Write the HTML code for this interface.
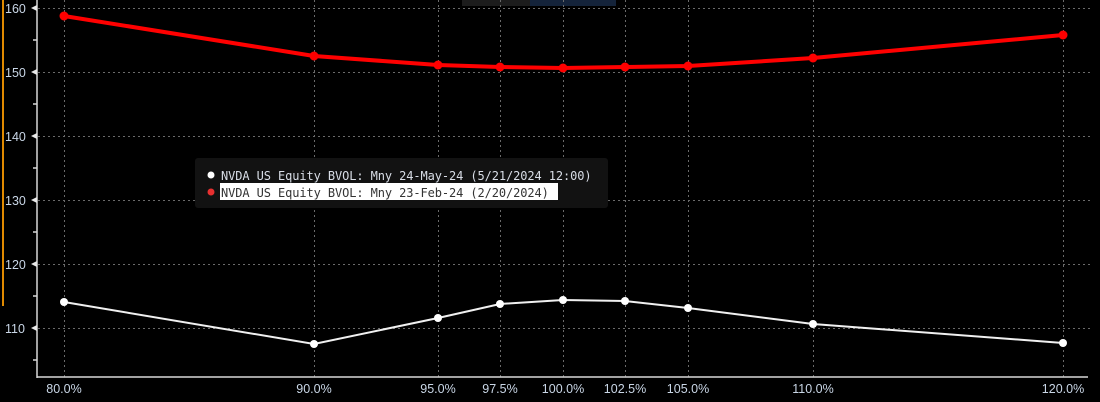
<!DOCTYPE html>
<html><head><meta charset="utf-8"><style>
html,body{margin:0;padding:0;background:#000;width:1100px;height:402px;overflow:hidden}
svg{display:block}
text{font-family:"Liberation Sans",sans-serif;font-size:12.5px;fill:#c9d6e6}
</style></head><body>
<svg width="1100" height="402" viewBox="0 0 1100 402">
<rect width="1100" height="402" fill="#000"/>
<rect x="2" y="0" width="2" height="306" fill="#e08a00"/>
<rect x="462" y="0" width="68" height="6" fill="#1c1c1c"/>
<rect x="530" y="0" width="86" height="6" fill="#14233a"/>
<g stroke="#6a6a6a" stroke-width="1" stroke-dasharray="2,3">
<line x1="38" y1="8.5" x2="1090" y2="8.5"/>
<line x1="38" y1="72.5" x2="1090" y2="72.5"/>
<line x1="38" y1="136.5" x2="1090" y2="136.5"/>
<line x1="38" y1="200.5" x2="1090" y2="200.5"/>
<line x1="38" y1="264.5" x2="1090" y2="264.5"/>
<line x1="38" y1="328.5" x2="1090" y2="328.5"/>
<line x1="64.5" y1="0" x2="64.5" y2="377"/>
<line x1="314.5" y1="0" x2="314.5" y2="377"/>
<line x1="438.5" y1="0" x2="438.5" y2="377"/>
<line x1="500.5" y1="0" x2="500.5" y2="377"/>
<line x1="563.5" y1="0" x2="563.5" y2="377"/>
<line x1="625.5" y1="0" x2="625.5" y2="377"/>
<line x1="688.5" y1="0" x2="688.5" y2="377"/>
<line x1="813.5" y1="0" x2="813.5" y2="377"/>
<line x1="1063.5" y1="0" x2="1063.5" y2="377"/>
</g>
<g stroke="#d8d8d8" stroke-width="1.5">
<line x1="37" y1="0" x2="37" y2="378"/>
<line x1="37" y1="377" x2="1088" y2="377"/>
<line x1="33" y1="40" x2="37" y2="40"/><line x1="33" y1="104" x2="37" y2="104"/>
<line x1="33" y1="168" x2="37" y2="168"/><line x1="33" y1="232" x2="37" y2="232"/>
<line x1="33" y1="296" x2="37" y2="296"/><line x1="33" y1="360" x2="37" y2="360"/>
</g>
<g fill="#e8e8e8">
<polygon points="31,8 37,5 37,11"/><polygon points="31,72 37,69 37,75"/>
<polygon points="31,136 37,133 37,139"/><polygon points="31,200 37,197 37,203"/>
<polygon points="31,264 37,261 37,267"/><polygon points="31,328 37,325 37,331"/>
</g>
<g text-anchor="start" style="font-size:14px">
<text x="5" y="13">160</text><text x="5" y="77">150</text><text x="5" y="141">140</text>
<text x="5" y="205">130</text><text x="5" y="269">120</text><text x="5" y="333">110</text>
</g>
<g text-anchor="middle">
<text x="64" y="393">80.0%</text><text x="314" y="393">90.0%</text><text x="438" y="393">95.0%</text>
<text x="500" y="393">97.5%</text><text x="563" y="393">100.0%</text><text x="625" y="393">102.5%</text>
<text x="688" y="393">105.0%</text><text x="813" y="393">110.0%</text><text x="1063" y="393">120.0%</text>
</g>
<polyline fill="none" stroke="#ff0000" stroke-width="4" stroke-linejoin="round" points="64,16 314,56 438,65 500,67 563,68 625,67 688,66 813,58 1063,35"/>
<g fill="#ff0000">
<circle cx="64" cy="16" r="4.5"/><circle cx="314" cy="56" r="4.5"/><circle cx="438" cy="65" r="4.5"/>
<circle cx="500" cy="67" r="4.5"/><circle cx="563" cy="68" r="4.5"/><circle cx="625" cy="67" r="4.5"/>
<circle cx="688" cy="66" r="4.5"/><circle cx="813" cy="58" r="4.5"/><circle cx="1063" cy="35" r="4.5"/>
</g>
<polyline fill="none" stroke="#f0f0f0" stroke-width="2" points="64,302 314,344 438,318 500,304 563,300 625,301 688,308 813,324 1063,343"/>
<g fill="#ffffff">
<circle cx="64" cy="302" r="4"/><circle cx="314" cy="344" r="4"/><circle cx="438" cy="318" r="4"/>
<circle cx="500" cy="304" r="4"/><circle cx="563" cy="300" r="4"/><circle cx="625" cy="301" r="4"/>
<circle cx="688" cy="308" r="4"/><circle cx="813" cy="324" r="4"/><circle cx="1063" cy="343" r="4"/>
</g>
<rect x="195" y="158" width="413" height="50" rx="3" fill="#121212"/>
<circle cx="211" cy="175" r="3.5" fill="#fff"/>
<circle cx="211" cy="192" r="3.5" fill="#e83030"/>
<rect x="220" y="183" width="338" height="17" fill="#fff"/>
<text x="221" y="180" style="font-family:'DejaVu Sans Mono','Liberation Mono',monospace;font-size:12px;letter-spacing:-0.1px;fill:#d8dde6">NVDA US Equity BVOL: Mny 24-May-24 (5/21/2024 12:00)</text>
<text x="221" y="197" style="font-family:'DejaVu Sans Mono','Liberation Mono',monospace;font-size:12px;letter-spacing:-0.1px;fill:#333">NVDA US Equity BVOL: Mny 23-Feb-24 (2/20/2024)</text>
</svg>
</body></html>
